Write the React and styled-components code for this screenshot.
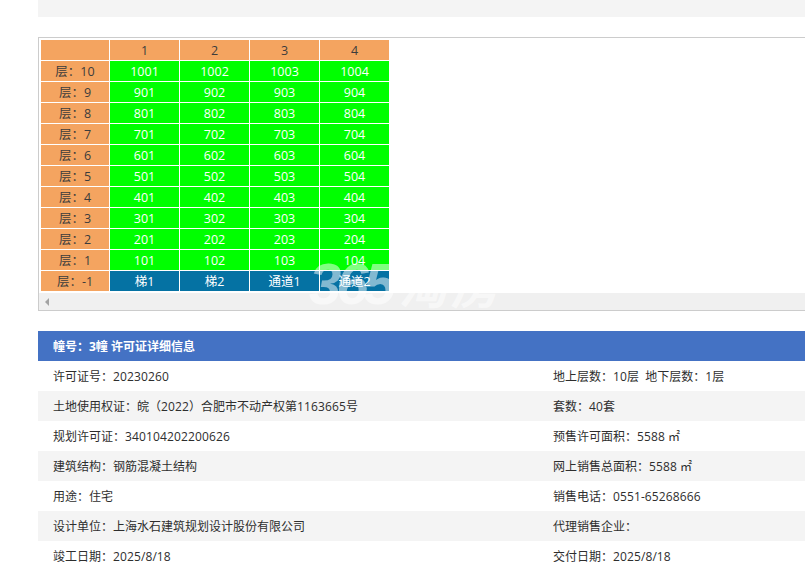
import React from 'react';
import styled, { createGlobalStyle } from 'styled-components';

const GlobalStyle = createGlobalStyle`
  html, body {
    margin: 0;
    padding: 0;
    background: #fff;
    overflow: hidden;
  }
  body {
    font-family: "Open Sans", "Noto Sans CJK SC", sans-serif;
  }
`;

const Page = styled.div`
  position: relative;
  width: 805px;
  height: 582px;
  overflow: hidden;
  padding-left: 38px;
  box-sizing: border-box;
`;

const TopBar = styled.div`
  height: 17px;
  background: #f4f4f4;
  margin-bottom: 20px;
`;

const TableBox = styled.div`
  height: 274px;
  border: 1px solid #ccc;
  border-right: 0;
  box-sizing: border-box;
  padding: 2px 0 0 2px;
  display: flex;
  flex-direction: column;
`;

const Grid = styled.div`
  display: grid;
  grid-template-columns: 68px repeat(4, 69px);
  grid-auto-rows: 20px;
  gap: 1px;
  width: 350px;
  background: #fff;
`;

const bgs = { head: '#f4a460', green: '#00ff00', blue: '#0572a3' };

const Cell = styled.div`
  background: ${p => bgs[p.$kind]};
  color: ${p => (p.$kind === 'head' ? '#3c3c3c' : '#fff')};
  font-size: 12.5px;
  line-height: 21px;
  text-align: center;
  white-space: nowrap;
`;

const ScrollTrack = styled.div`
  margin: auto 0 0 -2px;
  height: 17px;
  background: #f0f0f0;
  display: flex;
  align-items: center;
  padding-left: 6px;
`;

const ArrowLeft = styled.span`
  width: 0;
  height: 0;
  border-top: 4px solid transparent;
  border-bottom: 4px solid transparent;
  border-right: 4px solid #a3a3a3;
`;

const Watermark = styled.div`
  position: absolute;
  left: 309px;
  top: 251px;
  display: flex;
  align-items: baseline;
  color: rgba(255, 255, 255, 0.5);
  font-family: "Liberation Sans", "Noto Sans CJK SC", sans-serif;
  font-weight: 700;
  font-style: italic;
  line-height: 66px;
  white-space: nowrap;
  pointer-events: none;
`;

const WatermarkDigits = styled.span`
  font-size: 58px;
  letter-spacing: -5px;
`;

const WatermarkName = styled.span`
  font-size: 48px;
  margin-left: 8px;
  letter-spacing: 4px;
`;

const InfoPanel = styled.div`
  margin-top: 20px;
`;

const InfoTitle = styled.div`
  height: 30px;
  background: #4472c4;
  color: #fff;
  font-size: 12px;
  font-weight: 700;
  line-height: 32px;
  padding-left: 15px;
`;

const InfoRow = styled.div`
  display: grid;
  grid-template-columns: 500px 1fr;
  height: 30px;
  background: ${p => (p.$shaded ? '#f4f4f4' : '#fff')};
`;

const InfoCell = styled.div`
  padding-left: 15px;
  color: #2e2e2e;
  font-size: 12px;
  line-height: 32px;
  height: 30px;
  white-space: pre;
`;

const Num = styled.span`
  letter-spacing: 0.13px;
`;

// digits in the reference are a touch wider than Open Sans
const withNums = text =>
  text.split(/(\d+)/).map((part, i) => (i % 2 ? <Num key={i}>{part}</Num> : part));

const floors = [10, 9, 8, 7, 6, 5, 4, 3, 2, 1];

const info = [
  ['许可证号：20230260', '地上层数：10层  地下层数：1层'],
  ['土地使用权证：皖（2022）合肥市不动产权第1163665号', '套数：40套'],
  ['规划许可证：340104202200626', '预售许可面积：5588 ㎡'],
  ['建筑结构：钢筋混凝土结构', '网上销售总面积：5588 ㎡'],
  ['用途：住宅', '销售电话：0551-65268666'],
  ['设计单位：上海水石建筑规划设计股份有限公司', '代理销售企业：'],
  ['竣工日期：2025/8/18', '交付日期：2025/8/18'],
];

export default function App() {
  return (
    <Page>
      <GlobalStyle />
      <TopBar />
      <TableBox>
        <Grid>
          <Cell $kind="head" />
          {[1, 2, 3, 4].map(n => (
            <Cell $kind="head" key={n}>{n}</Cell>
          ))}
          {floors.map(f => (
            <React.Fragment key={f}>
              <Cell $kind="head">层：{f}</Cell>
              {[1, 2, 3, 4].map(n => (
                <Cell $kind="green" key={n}>{f * 100 + n}</Cell>
              ))}
            </React.Fragment>
          ))}
          <Cell $kind="head">层：-1</Cell>
          {['梯1', '梯2', '通道1', '通道2'].map(t => (
            <Cell $kind="blue" key={t}>{t}</Cell>
          ))}
        </Grid>
        <ScrollTrack>
          <ArrowLeft />
        </ScrollTrack>
      </TableBox>
      <InfoPanel>
        <InfoTitle>幢号：3幢 许可证详细信息</InfoTitle>
        {info.map((row, i) => (
          <InfoRow key={row[0]} $shaded={i % 2 === 1}>
            <InfoCell>{withNums(row[0])}</InfoCell>
            <InfoCell>{withNums(row[1])}</InfoCell>
          </InfoRow>
        ))}
      </InfoPanel>
      <Watermark>
        <WatermarkDigits>365</WatermarkDigits>
        <WatermarkName>淘房</WatermarkName>
      </Watermark>
    </Page>
  );
}
